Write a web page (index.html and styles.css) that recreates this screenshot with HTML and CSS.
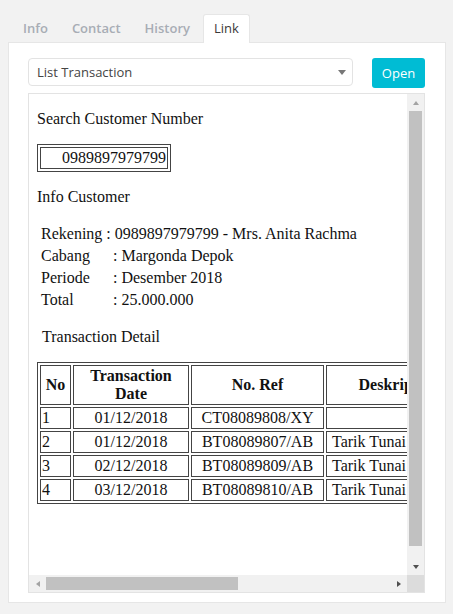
FILE: index.html
```html
<!DOCTYPE html>
<html>
<head>
<meta charset="utf-8">
<title>Link</title>
<link rel="stylesheet" href="styles.css">
</head>
<body>
<div class="tabs">
  <div class="tab">Info</div>
  <div class="tab">Contact</div>
  <div class="tab">History</div>
  <div class="tab active">Link</div>
</div>
<div class="panel">
  <div class="toolbar">
    <div class="select"><span>List Transaction</span><i class="caret"></i></div>
    <button class="btn">Open</button>
  </div>
  <div class="frame">
    <div class="view">
      <div class="doc">
        <p>Search Customer Number</p>
        <div class="numbox"><div class="numcell">0989897979799</div></div>
        <p>Info Customer</p>
        <div class="info">
          <div class="row"><span class="lbl lbl-auto">Rekening</span>: 0989897979799 - Mrs. Anita Rachma</div>
          <div class="row"><span class="lbl">Cabang</span>: Margonda Depok</div>
          <div class="row"><span class="lbl">Periode</span>: Desember 2018</div>
          <div class="row"><span class="lbl">Total</span>: 25.000.000</div>
        </div>
        <p class="indent">Transaction Detail</p>
        <table class="trx">
          <thead>
            <tr>
              <th class="c-no">No</th>
              <th class="c-date">Transaction Date</th>
              <th class="c-ref">No. Ref</th>
              <th class="c-desc">Deskripsi</th>
              <th class="c-amt">Debit</th>
              <th class="c-amt">Kredit</th>
            </tr>
          </thead>
          <tbody>
            <tr><td>1</td><td class="center">01/12/2018</td><td class="center">CT08089808/XY</td><td class="desc"></td><td class="num"></td><td class="num">25.000.000</td></tr>
            <tr><td>2</td><td class="center">01/12/2018</td><td class="center">BT08089807/AB</td><td class="desc">Tarik Tunai</td><td class="num">500.000</td><td class="num"></td></tr>
            <tr><td>3</td><td class="center">02/12/2018</td><td class="center">BT08089809/AB</td><td class="desc">Tarik Tunai</td><td class="num">1.000.000</td><td class="num"></td></tr>
            <tr><td>4</td><td class="center">03/12/2018</td><td class="center">BT08089810/AB</td><td class="desc">Tarik Tunai</td><td class="num">750.000</td><td class="num"></td></tr>
          </tbody>
        </table>
      </div>
    </div>
    <div class="vbar">
      <div class="sb-btn"><i class="arr-up"></i></div>
      <div class="vthumb"></div>
      <div class="sb-fill"></div>
      <div class="sb-btn"><i class="arr-down"></i></div>
    </div>
    <div class="hbar">
      <div class="sb-btn"><i class="arr-left"></i></div>
      <div class="hthumb"></div>
      <div class="sb-fill"></div>
      <div class="sb-btn"><i class="arr-right"></i></div>
    </div>
    <div class="corner"></div>
  </div>
</div>
</body>
</html>
```

FILE: styles.css
```css
* { box-sizing: border-box; }
html, body { margin: 0; }
body {
  background: #f2f2f2;
  font-family: "Open Sans", sans-serif;
  padding-top: 14px;
  width: 453px;
  height: 614px;
  overflow: hidden;
}
.tabs {
  display: flex;
  gap: 2px;
  padding-left: 12px;
  height: 28px;
}
.tab {
  padding: 0 11px;
  font-size: 13px;
  font-weight: 600;
  color: #a8adb5;
  line-height: 28px;
}
.tab.active {
  position: relative;
  z-index: 1;
  height: 29px;
  background: #fff;
  color: #3a3a3a;
  font-weight: 400;
  border: 1px solid #e6e6e6;
  border-bottom: none;
  border-radius: 3px 3px 0 0;
  padding: 0 10px;
  line-height: 27px;
}
.panel {
  margin-left: 8px;
  width: 438px;
  background: #fff;
  border: 1px solid #e6e6e6;
  padding: 15px 20px 9px 19px;
}
.toolbar {
  display: flex;
  gap: 19px;
  align-items: flex-start;
}
.select {
  flex: 1;
  height: 28px;
  border: 1px solid #e3e3e3;
  border-radius: 4px;
  display: flex;
  align-items: center;
  justify-content: space-between;
  padding: 0 6px 0 8px;
  font-size: 13px;
  color: #444;
}
.caret {
  width: 0;
  height: 0;
  border-left: 4px solid transparent;
  border-right: 4px solid transparent;
  border-top: 5px solid #777;
}
.btn {
  width: 53px;
  height: 30px;
  padding: 0;
  border: none;
  border-radius: 3px;
  background: #00bcd4;
  color: #fff;
  font-family: "Open Sans", sans-serif;
  font-size: 13px;
}
.frame {
  margin-top: 5px;
  width: 397px;
  height: 500px;
  border: 1px solid #e3e3e3;
  display: grid;
  grid-template-columns: 378px 17px;
  grid-template-rows: 481px 17px;
}
.view {
  overflow: hidden;
  background: #fff;
}
.doc {
  width: 700px;
  padding: 0 8px;
  font-family: "Liberation Serif", "Times New Roman", serif;
  font-size: 16px;
  line-height: 18px;
  color: #111;
}
.doc p {
  margin: 16px 0 0;
}
.doc p.indent {
  padding-left: 5px;
}
.numbox {
  margin-top: 16px;
  width: 134px;
  border: 1px solid #444;
  padding: 2px;
}
.numcell {
  border: 1px solid #444;
  padding: 1px;
  text-align: right;
}
.info {
  margin-top: 16px;
  padding: 2px 0 2px 4px;
  display: flex;
  flex-direction: column;
  gap: 2px;
}
.row {
  line-height: 20px;
  white-space: nowrap;
}
.lbl {
  display: inline-block;
  width: 72px;
}
.lbl.lbl-auto {
  width: auto;
  padding-right: 4px;
}
.trx {
  margin-top: 16px;
  table-layout: fixed;
  width: 666px;
  border: 1px solid #444;
  border-collapse: separate;
  border-spacing: 2px;
  font-size: 16px;
  line-height: 18px;
}
.trx th, .trx td {
  box-sizing: border-box;
  border: 1px solid #444;
  padding: 1px;
  overflow: hidden;
}
.trx td { white-space: nowrap; }
.c-no { width: 31px; }
.c-date { width: 116px; }
.c-ref { width: 133px; }
.c-desc { width: 130px; }
.c-amt { width: 120px; }
.center { text-align: center; }
.trx td.desc { padding-left: 5px; }
.num { text-align: right; }
.vbar {
  background: #f1f1f1;
  display: flex;
  flex-direction: column;
}
.hbar {
  background: #f1f1f1;
  display: flex;
}
.sb-btn {
  flex: none;
  width: 17px;
  height: 17px;
  display: flex;
  align-items: center;
  justify-content: center;
}
.sb-fill { flex: 1; }
.vthumb {
  flex: none;
  height: 435px;
  margin: 0 2px;
  background: #c1c1c1;
}
.hthumb {
  flex: none;
  width: 192px;
  margin: 2px 0;
  background: #c1c1c1;
}
.corner { background: #dcdcdc; }
.arr-up, .arr-down, .arr-left, .arr-right { width: 0; height: 0; }
.arr-up {
  border-left: 3.5px solid transparent;
  border-right: 3.5px solid transparent;
  border-bottom: 4px solid #a3a3a3;
}
.arr-down {
  border-left: 3.5px solid transparent;
  border-right: 3.5px solid transparent;
  border-top: 4px solid #505050;
}
.arr-left {
  border-top: 3.5px solid transparent;
  border-bottom: 3.5px solid transparent;
  border-right: 4px solid #a3a3a3;
}
.arr-right {
  border-top: 3.5px solid transparent;
  border-bottom: 3.5px solid transparent;
  border-left: 4px solid #505050;
}
```
